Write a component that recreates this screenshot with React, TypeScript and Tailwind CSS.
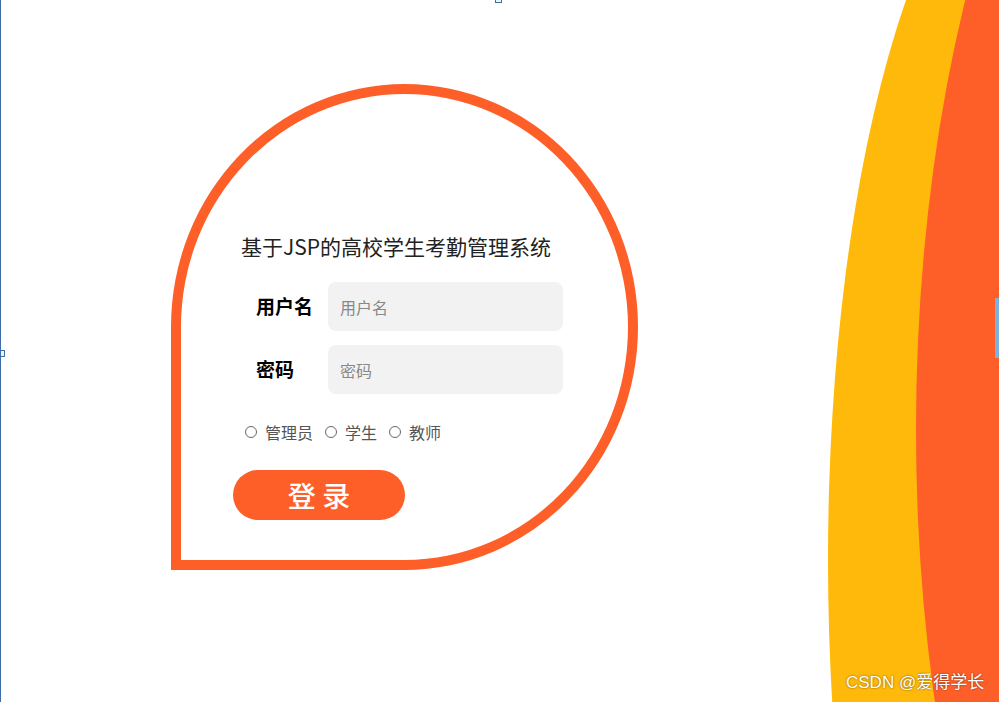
import React from "react";

const CJK = '"Noto Sans CJK SC", "Noto Sans", sans-serif';

function Radio({ label }: { label: string }) {
  return (
    <label className="flex items-center gap-[8px]">
      <span className="block w-[12px] h-[12px] rounded-full border border-[#666] bg-white" />
      <span>{label}</span>
    </label>
  );
}

export default function App() {
  return (
    <div
      className="relative w-[999px] h-[702px] overflow-hidden bg-white"
      style={{ fontFamily: CJK }}
    >
      {/* decorative curves */}
      <svg
        className="absolute left-0 top-0"
        width="999"
        height="702"
        viewBox="0 0 999 702"
      >
        <ellipse cx="1061" cy="560" rx="233" ry="750" fill="#ffb90b" />
        <ellipse cx="1321" cy="430" rx="405" ry="900" fill="#fe5f29" />
      </svg>

      {/* selection frame markers */}
      <div className="absolute left-0 top-0 h-full w-[1px] bg-[#3f6fa8]" />
      <div className="absolute left-0 top-[350px] w-[5px] h-[7px] border border-[#3f6fa8] bg-[#eaf2fb]" />
      <div className="absolute left-[495px] top-0 w-[7px] h-[3px] border border-[#3f6fa8] border-t-0 bg-[#eaf2fb]" />
      <div className="absolute right-0 top-[298px] w-[4px] h-[60px] bg-[#7fb0de]" />

      <div className="relative pt-[84px] pl-[171px]">
        <div className="w-[467px] h-[486px] border-[10px] border-[#fe5f29] rounded-[50%_50%_50%_0] bg-white">
          <div className="pt-[140px] flex flex-col">
            <div className="pl-[60px] text-[21px] leading-[24px] text-[#222]">
              基于JSP的高校学生考勤管理系统
            </div>

            <div className="mt-[24px] flex flex-col gap-[14px]">
              <div className="flex items-center">
                <div className="w-[147px] pl-[75px] text-[19px] font-bold text-black">
                  用户名
                </div>
                <input
                  className="w-[235px] h-[49px] rounded-[8px] bg-[#f2f2f2] pl-[12px] text-[16px] text-[#333] outline-none placeholder:text-[#888]"
                  style={{ fontFamily: CJK }}
                  placeholder="用户名"
                />
              </div>
              <div className="flex items-center">
                <div className="w-[147px] pl-[75px] text-[19px] font-bold text-black">
                  密码
                </div>
                <input
                  type="password"
                  className="w-[235px] h-[49px] rounded-[8px] bg-[#f2f2f2] pl-[12px] text-[16px] text-[#333] outline-none placeholder:text-[#888]"
                  style={{ fontFamily: CJK }}
                  placeholder="密码"
                />
              </div>
            </div>

            <div className="mt-[28px] pl-[64px] flex items-center gap-[12px] text-[16px] leading-[20px] text-[#555]">
              <Radio label="管理员" />
              <Radio label="学生" />
              <Radio label="教师" />
            </div>

            <div className="mt-[28px] pl-[52px]">
              <button
                className="w-[172px] h-[50px] rounded-full bg-[#fe5f29] text-white text-[28px] font-medium leading-none"
                style={{ fontFamily: CJK }}
              >
                登 录
              </button>
            </div>
          </div>
        </div>
      </div>

      <div
        className="absolute left-[846px] top-[672px] text-[17px] leading-[22px] text-white"
        style={{ textShadow: "0 0 2px rgba(0,0,0,0.6)", fontFamily: '"Liberation Sans", "Noto Sans CJK SC", sans-serif' }}
      >
        CSDN @爱得学长
      </div>
    </div>
  );
}
